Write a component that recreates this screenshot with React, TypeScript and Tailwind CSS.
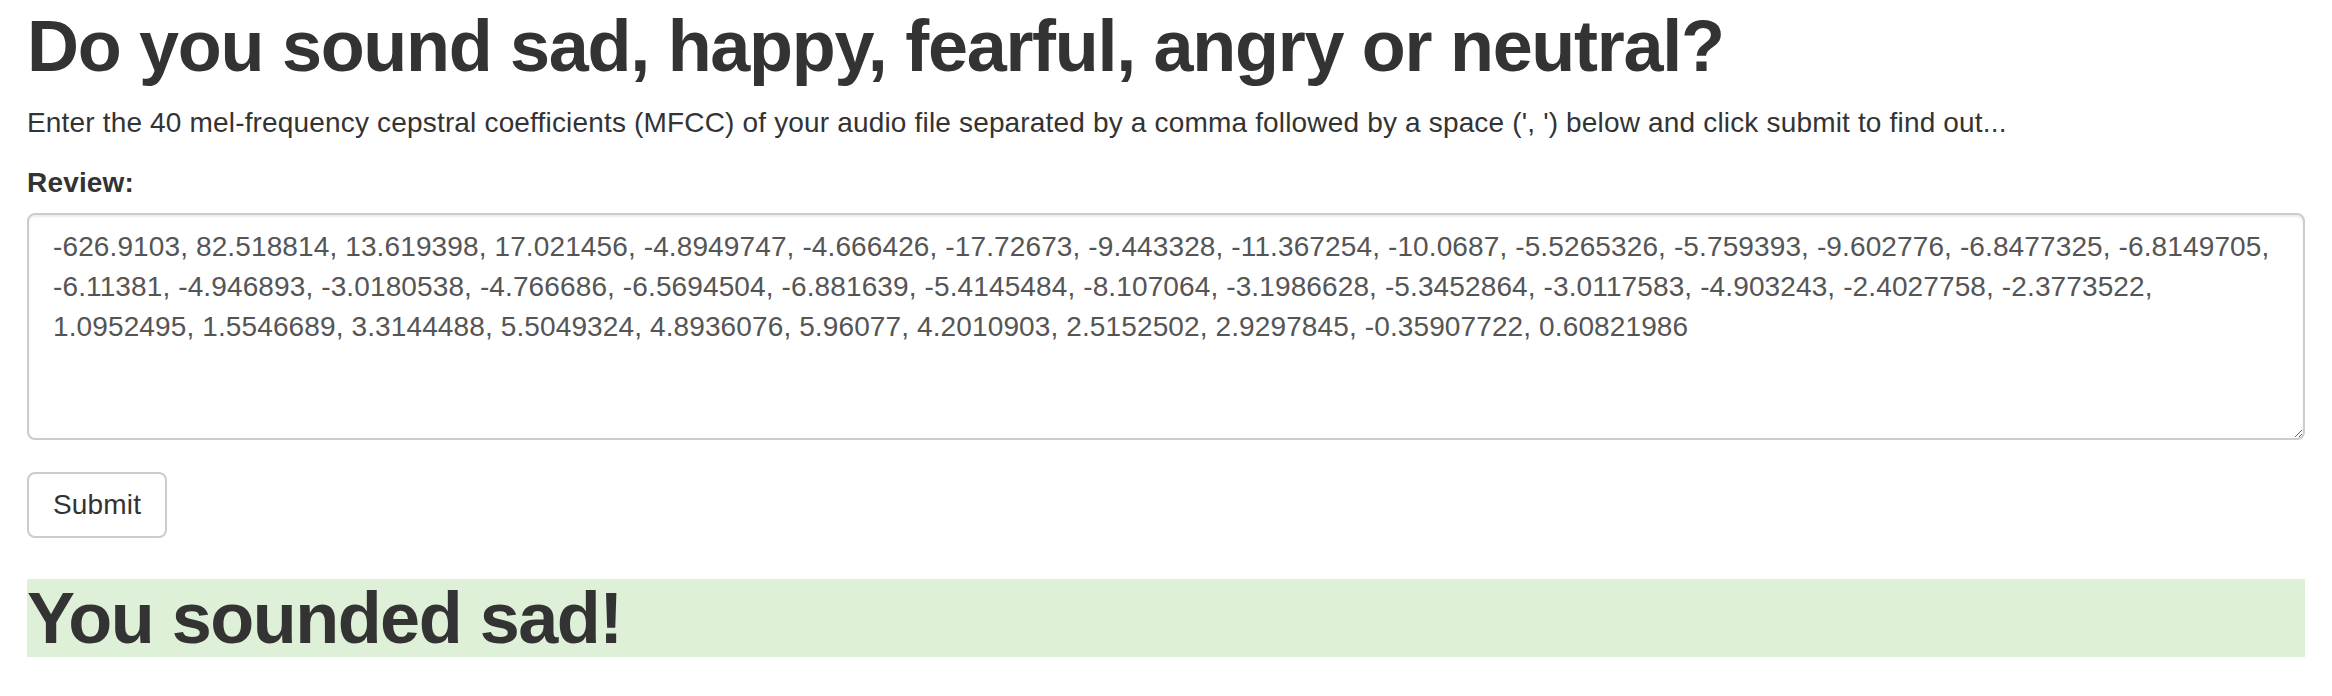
const MFCC =
  "-626.9103, 82.518814, 13.619398, 17.021456, -4.8949747, -4.666426, -17.72673, -9.443328, -11.367254, -10.0687, -5.5265326, -5.759393, -9.602776, -6.8477325, -6.8149705, -6.11381, -4.946893, -3.0180538, -4.766686, -6.5694504, -6.881639, -5.4145484, -8.107064, -3.1986628, -5.3452864, -3.0117583, -4.903243, -2.4027758, -2.3773522, 1.0952495, 1.5546689, 3.3144488, 5.5049324, 4.8936076, 5.96077, 4.2010903, 2.5152502, 2.9297845, -0.35907722, 0.60821986";

export default function App() {
  return (
    <div className="min-h-screen bg-white px-[27px] pt-[7px] font-['Liberation_Sans',Arial,sans-serif] text-[28px] leading-[40px] tracking-[0.17px] text-[#333]">
      <h1 className="m-0 text-[72px] leading-[79px] font-bold tracking-[-1.3px]">
        Do you sound sad, happy, fearful, angry or neutral?
      </h1>
      <p className="mt-[17px] mb-[20px]">
        Enter the 40 mel-frequency cepstral coefficients (MFCC) of your audio file separated by a comma followed by a
        space (', ') below and click submit to find out...
      </p>
      <form className="flex flex-col items-start" onSubmit={(e) => e.preventDefault()}>
        <label htmlFor="review" className="mb-[10px] font-bold">
          Review:
        </label>
        <textarea
          id="review"
          rows={5}
          defaultValue={MFCC}
          className="block h-[227px] w-full rounded-[8px] border-2 border-[#ccc] bg-white px-[24px] py-[12px] text-[28px] leading-[40px] tracking-[0.12px] text-[#555] shadow-[inset_0_2px_2px_rgba(0,0,0,0.075)] outline-none"
        />
        <button
          type="submit"
          className="mt-[32px] h-[66px] rounded-[8px] border-2 border-[#ccc] bg-white px-[24px] text-[28px] text-[#333]"
        >
          Submit
        </button>
      </form>
      <h1 className="mt-[41px] bg-[#dff0d8] text-[72px] leading-[78px] font-bold tracking-[-1.5px]">You sounded sad!</h1>
    </div>
  );
}
